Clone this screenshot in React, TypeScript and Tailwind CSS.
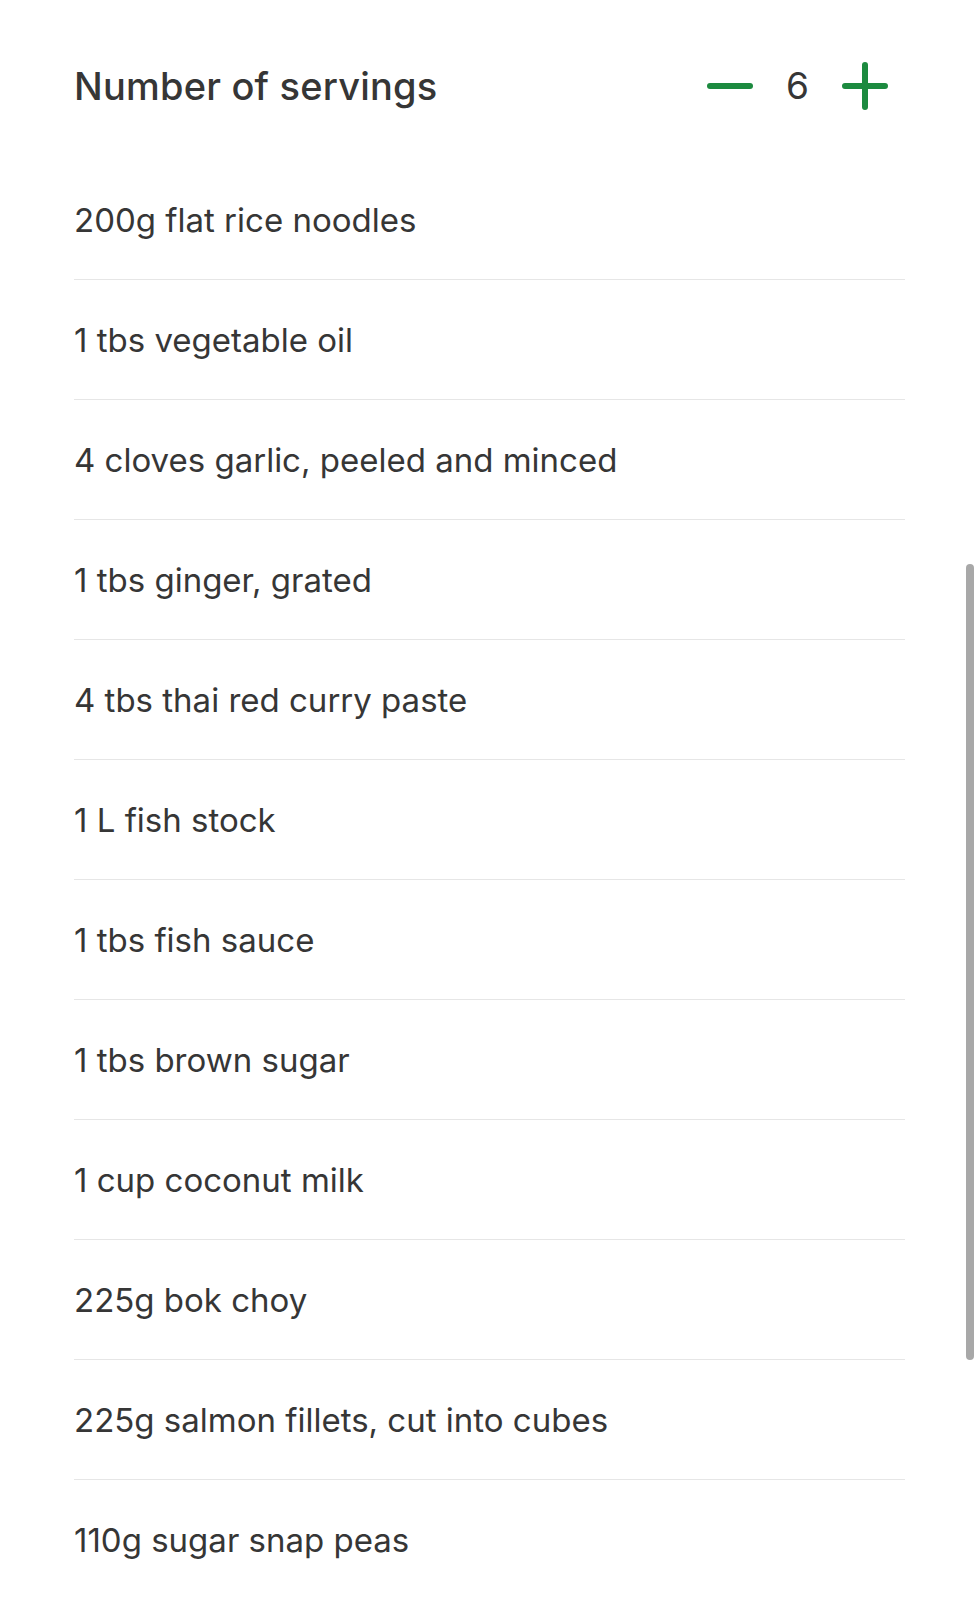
const ingredients = [
  "200g flat rice noodles",
  "1 tbs vegetable oil",
  "4 cloves garlic, peeled and minced",
  "1 tbs ginger, grated",
  "4 tbs thai red curry paste",
  "1 L fish stock",
  "1 tbs fish sauce",
  "1 tbs brown sugar",
  "1 cup coconut milk",
  "225g bok choy",
  "225g salmon fillets, cut into cubes",
  "110g sugar snap peas",
];

function Minus() {
  return (
    <svg width="48" height="48" viewBox="0 0 48 48" fill="none">
      <path d="M4 24h40" stroke="#1c8a3f" strokeWidth="6" strokeLinecap="round" />
    </svg>
  );
}

function Plus() {
  return (
    <svg width="48" height="48" viewBox="0 0 48 48" fill="none">
      <path d="M4 24h40M24 3v42" stroke="#1c8a3f" strokeWidth="6" strokeLinecap="round" />
    </svg>
  );
}

export default function App() {
  return (
    <div className="relative min-h-[1600px] overflow-hidden bg-white font-['Inter',sans-serif] text-[#363636]">
      <div className="pl-[74px] pr-[75px]">
        <div className="flex h-[160px] items-center justify-between pt-[12px]">
          <h1 className="text-[38px] font-medium tracking-[0.2px]">Number of servings</h1>
          <div className="mr-[16px] flex items-center gap-[32px]">
            <Minus />
            <span className="text-[37px]">6</span>
            <Plus />
          </div>
        </div>

        <ul>
          {ingredients.map((item, i) => (
            <li
              key={item}
              className={
                i < ingredients.length - 1
                  ? "flex h-[120px] items-center border-b border-[#e6e6e6] pt-[2px] text-[33px]"
                  : "flex h-[120px] items-center pt-[2px] text-[33px]"
              }
            >
              {item}
            </li>
          ))}
        </ul>
      </div>

      <div className="absolute right-[6px] top-[564px] h-[796px] w-[8px] rounded-full bg-[#a8a8a8]" />
    </div>
  );
}
